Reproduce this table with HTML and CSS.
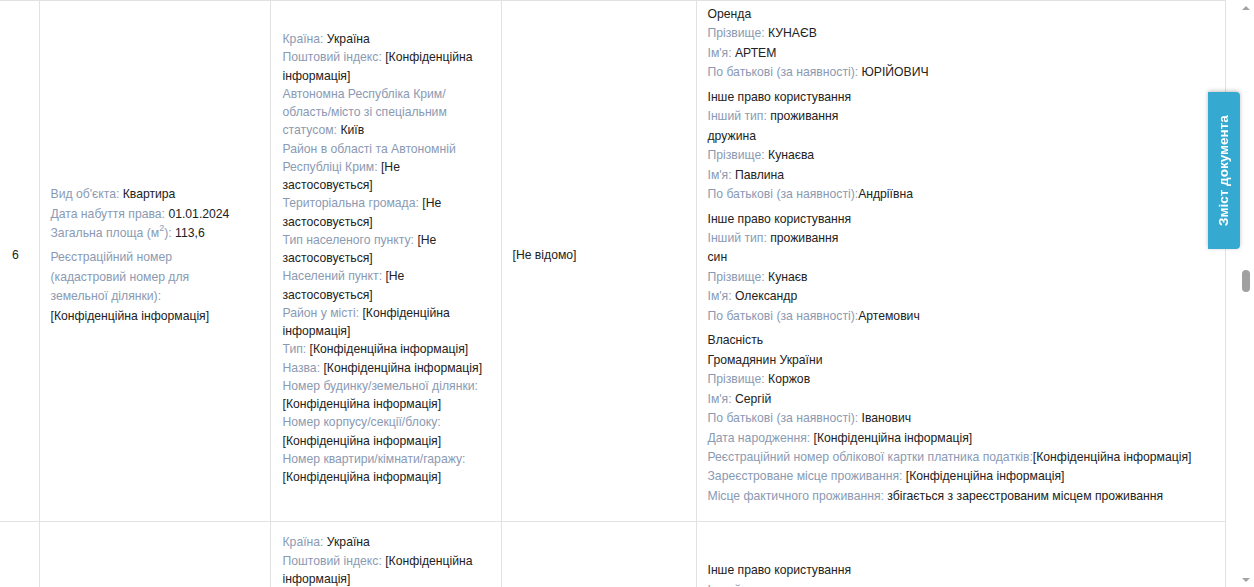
FILE: index.html
```html
<!DOCTYPE html>
<html lang="uk">
<head>
<meta charset="utf-8">
<title>Реєстр</title>
<link rel="stylesheet" href="styles.css">
</head>
<body>
<div class="page">
  <main class="main">
    <table class="reg">
      <colgroup>
        <col class="c-num"><col class="c-obj"><col class="c-addr"><col class="c-unk"><col class="c-rights">
      </colgroup>
      <tbody>
        <tr class="row-main">
          <td class="num">6</td>
          <td class="obj">
            <div class="grp">
              <div class="ln"><span class="lb">Вид об'єкта:</span> Квартира</div>
              <div class="ln"><span class="lb">Дата набуття права:</span> 01.01.2024</div>
              <div class="ln"><span class="lb">Загальна площа (м<sup>2</sup>):</span> 113,6</div>
            </div>
            <div class="grp">
              <div class="ln"><span class="lb">Реєстраційний номер (кадастровий номер для земельної ділянки):</span> [Конфіденційна інформація]</div>
            </div>
          </td>
          <td class="addr-cell">
            <div class="addr">
              <div><span class="lb">Країна:</span> Україна</div>
              <div><span class="lb">Поштовий індекс:</span> [Конфіденційна інформація]</div>
              <div><span class="lb">Автономна Республіка Крим/ область/місто зі спеціальним статусом:</span> Київ</div>
              <div><span class="lb">Район в області та Автономній Республіці Крим:</span> [Не застосовується]</div>
              <div><span class="lb">Територіальна громада:</span> [Не застосовується]</div>
              <div><span class="lb">Тип населеного пункту:</span> [Не застосовується]</div>
              <div><span class="lb">Населений пункт:</span> [Не застосовується]</div>
              <div><span class="lb">Район у місті:</span> [Конфіденційна інформація]</div>
              <div><span class="lb">Тип:</span> [Конфіденційна інформація]</div>
              <div><span class="lb">Назва:</span> [Конфіденційна інформація]</div>
              <div><span class="lb">Номер будинку/земельної ділянки:</span> [Конфіденційна інформація]</div>
              <div><span class="lb">Номер корпусу/секції/блоку:</span> [Конфіденційна інформація]</div>
              <div><span class="lb">Номер квартири/кімнати/гаражу:</span> [Конфіденційна інформація]</div>
            </div>
          </td>
          <td>[Не відомо]</td>
          <td>
            <div class="grp">
              <div class="ln">Оренда</div>
              <div class="ln"><span class="lb">Прізвище:</span> КУНАЄВ</div>
              <div class="ln"><span class="lb">Ім'я:</span> АРТЕМ</div>
              <div class="ln"><span class="lb">По батькові (за наявності):</span> ЮРІЙОВИЧ</div>
            </div>
            <div class="grp">
              <div class="ln">Інше право користування</div>
              <div class="ln"><span class="lb">Інший тип:</span> проживання</div>
              <div class="ln">дружина</div>
              <div class="ln"><span class="lb">Прізвище:</span> Кунаєва</div>
              <div class="ln"><span class="lb">Ім'я:</span> Павлина</div>
              <div class="ln"><span class="lb">По батькові (за наявності):</span>Андріївна</div>
            </div>
            <div class="grp">
              <div class="ln">Інше право користування</div>
              <div class="ln"><span class="lb">Інший тип:</span> проживання</div>
              <div class="ln">син</div>
              <div class="ln"><span class="lb">Прізвище:</span> Кунаєв</div>
              <div class="ln"><span class="lb">Ім'я:</span> Олександр</div>
              <div class="ln"><span class="lb">По батькові (за наявності):</span>Артемович</div>
            </div>
            <div class="grp">
              <div class="ln">Власність</div>
              <div class="ln">Громадянин України</div>
              <div class="ln"><span class="lb">Прізвище:</span> Коржов</div>
              <div class="ln"><span class="lb">Ім'я:</span> Сергій</div>
              <div class="ln"><span class="lb">По батькові (за наявності):</span> Іванович</div>
              <div class="ln"><span class="lb">Дата народження:</span> [Конфіденційна інформація]</div>
              <div class="ln"><span class="lb">Реєстраційний номер облікової картки платника податків:</span>[Конфіденційна інформація]</div>
              <div class="ln"><span class="lb">Зареєстроване місце проживання:</span> [Конфіденційна інформація]</div>
              <div class="ln"><span class="lb">Місце фактичного проживання:</span> збігається з зареєстрованим місцем проживання</div>
            </div>
          </td>
        </tr>
        <tr class="row-next">
          <td class="num"></td>
          <td class="obj"></td>
          <td class="addr-cell pad-addr">
            <div class="addr">
              <div><span class="lb">Країна:</span> Україна</div>
              <div><span class="lb">Поштовий індекс:</span> [Конфіденційна інформація]</div>
              <div><span class="lb">Автономна Республіка Крим/ область/місто зі спеціальним статусом:</span> Київ</div>
            </div>
          </td>
          <td></td>
          <td class="pad-rights">
            <div class="grp">
              <div class="ln">Інше право користування</div>
              <div class="ln"><span class="lb">Інший тип:</span> проживання</div>
            </div>
          </td>
        </tr>
      </tbody>
    </table>
  </main>
  <div class="scrollbar">
    <span class="arrow up"></span>
    <span class="thumb"></span>
    <span class="arrow down"></span>
  </div>
</div>
<a class="toc-tab" href="#">Зміст документа</a>
</body>
</html>
```

FILE: styles.css
```css
html, body {
  margin: 0;
  padding: 0;
  height: 100%;
  overflow: hidden;
  background: #fff;
}
body {
  font-family: "Liberation Sans", Arial, sans-serif;
  font-size: 12.2px;
  color: #222;
}
.page {
  display: flex;
  height: 587px;
}
.main {
  flex: 1;
  overflow: hidden;
}
.reg {
  border-collapse: collapse;
  table-layout: fixed;
  width: 1225px;
}
.c-num { width: 39px; }
.c-obj { width: 231px; }
.c-addr { width: 231px; }
.c-unk { width: 195px; }
.c-rights { width: 529px; }
.reg td {
  border: 1px solid #e2e2e2;
  padding: 4px 11px 15px 11px;
  vertical-align: middle;
  line-height: 19.45px;
}
.reg td:first-child {
  border-left: none;
}
.reg td.num {
  padding-left: 12px;
  padding-right: 4px;
}
.reg td.obj {
  padding-right: 22px;
}
.reg td.addr-cell {
  padding-left: 12px;
  padding-right: 16px;
}
.ln { line-height: 19.45px; }
.grp + .grp { margin-top: 5px; }
.lb { color: #8a9ab3; }
sup {
  font-size: 9px;
  line-height: 0;
  vertical-align: 6px;
}
.addr {
  line-height: 18.25px;
}
.row-main .addr {
  padding-top: 5px;
}
.row-next td {
  vertical-align: top;
  height: 200px;
}
.row-next td.pad-addr { padding-top: 11px; }
.row-next td.pad-rights { padding-top: 39px; }

.scrollbar {
  width: 16px;
  flex: none;
  display: flex;
  flex-direction: column;
  align-items: center;
  background: #fff;
}
.arrow {
  width: 0;
  height: 0;
  border-left: 4px solid transparent;
  border-right: 4px solid transparent;
}
.arrow.up {
  border-bottom: 4px solid #a3a3a3;
  margin-top: 6px;
}
.arrow.down {
  border-top: 4px solid #a3a3a3;
  margin-top: auto;
  margin-bottom: 5px;
}
.thumb {
  width: 8px;
  height: 22px;
  border-radius: 4px;
  background: #a0a0a0;
  margin-top: 260px;
}
.toc-tab {
  position: fixed;
  left: 1208px;
  top: 92px;
  width: 32px;
  height: 157px;
  box-sizing: border-box;
  background: #36a9d1;
  border-radius: 4px 0 0 4px;
  box-shadow: 0 1px 4px rgba(0, 0, 0, 0.25);
  color: #fff;
  font-weight: bold;
  font-size: 13.5px;
  text-decoration: none;
  writing-mode: vertical-rl;
  transform: rotate(180deg);
  display: flex;
  align-items: center;
  justify-content: center;
  line-height: 1;
}
```
